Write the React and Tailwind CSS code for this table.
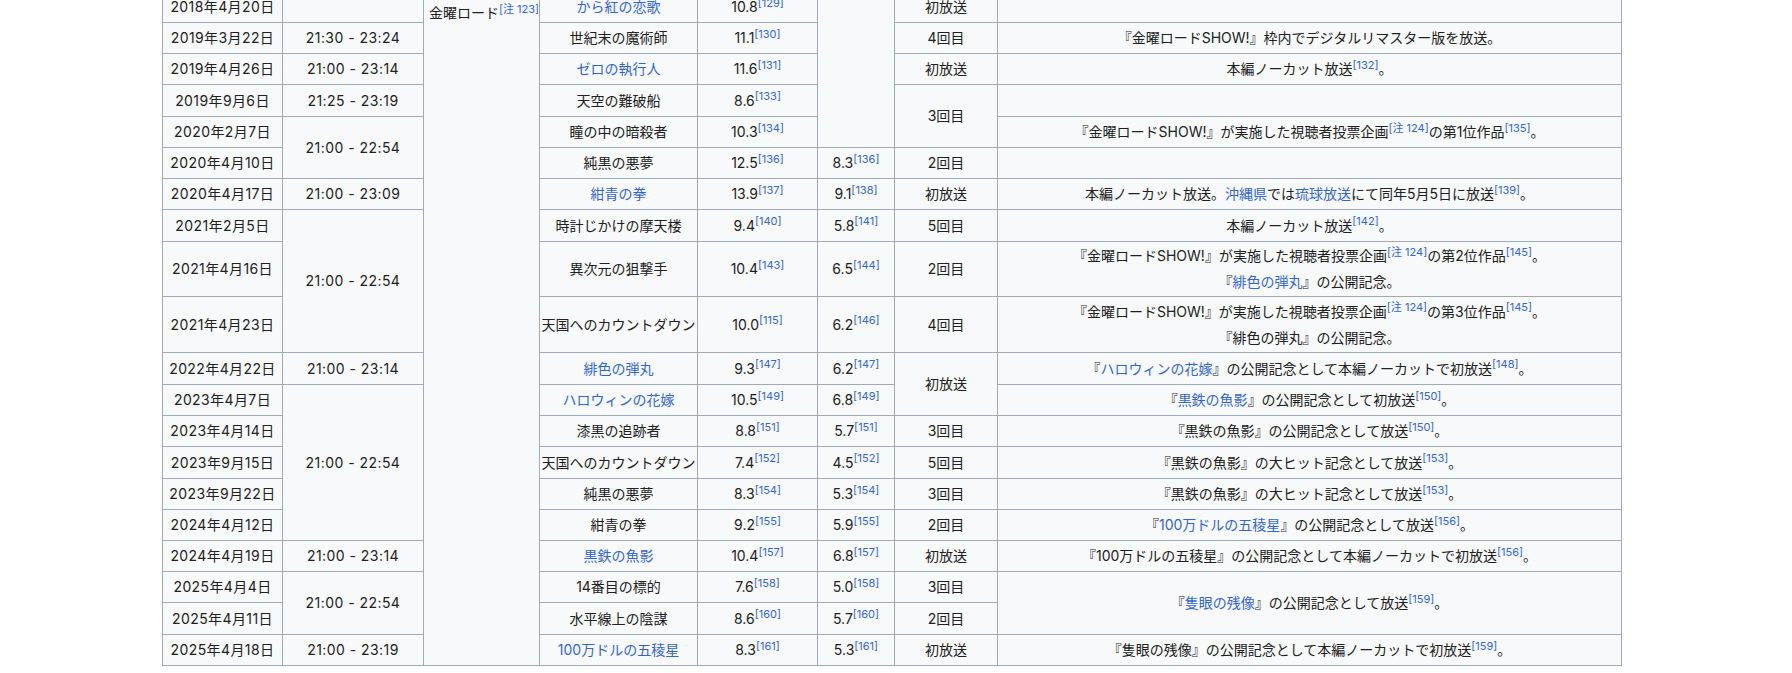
const LINK = 'text-[#3366cc]'

function Ref({ children }) {
  return <sup className="text-[11px] tracking-normal text-[#3366cc]">[{children}]</sup>
}

function L({ children }) {
  return <span className={LINK}>{children}</span>
}

function Td({ children, rowSpan, className = '' }) {
  return (
    <td
      rowSpan={rowSpan}
      className={`border border-[#a2a9b1] px-px py-0 text-center align-middle whitespace-nowrap ${className}`}
    >
      {children}
    </td>
  )
}

// date and time cells: the reference's digits run a bit wider than Inter's
function D({ children }) {
  return <Td className="tracking-[0.4px]">{children}</Td>
}

function T({ children, rowSpan }) {
  return (
    <Td rowSpan={rowSpan} className="tracking-[0.45px]">
      {children}
    </Td>
  )
}

const SHOW = '『金曜ロードSHOW!』'

export default function App() {
  return (
    <div className="h-[673px] overflow-hidden bg-white pl-[162px]">
      <table className="-mt-[9px] w-[1459px] table-fixed border-collapse bg-[#f8f9fa] font-['Inter','Noto_Sans_CJK_JP',sans-serif] text-[14px] leading-[26px] text-[#202122]">
        <colgroup>
          <col className="w-[120px]" />
          <col className="w-[141px]" />
          <col className="w-[116px]" />
          <col className="w-[158px]" />
          <col className="w-[120px]" />
          <col className="w-[77px]" />
          <col className="w-[103px]" />
          <col className="w-[624px]" />
        </colgroup>
        <tbody>
          <tr className="h-[31px]">
            <D>2018年4月20日</D>
            <Td></Td>
            <Td rowSpan={20} className="!text-left !align-top pl-[5px] pt-[8px]">
              金曜ロード<Ref>注 123</Ref>
            </Td>
            <Td><L>から紅の恋歌</L></Td>
            <Td>10.8<Ref>129</Ref></Td>
            <Td rowSpan={5}></Td>
            <Td>初放送</Td>
            <Td></Td>
          </tr>
          <tr className="h-[31px]">
            <D>2019年3月22日</D>
            <T>21:30 - 23:24</T>
            <Td>世紀末の魔術師</Td>
            <Td>11.1<Ref>130</Ref></Td>
            <Td>4回目</Td>
            <Td>{SHOW}枠内でデジタルリマスター版を放送。</Td>
          </tr>
          <tr className="h-[31px]">
            <D>2019年4月26日</D>
            <T>21:00 - 23:14</T>
            <Td><L>ゼロの執行人</L></Td>
            <Td>11.6<Ref>131</Ref></Td>
            <Td>初放送</Td>
            <Td>本編ノーカット放送<Ref>132</Ref>。</Td>
          </tr>
          <tr className="h-[32px]">
            <D>2019年9月6日</D>
            <T>21:25 - 23:19</T>
            <Td>天空の難破船</Td>
            <Td>8.6<Ref>133</Ref></Td>
            <Td rowSpan={2}>3回目</Td>
            <Td></Td>
          </tr>
          <tr className="h-[31px]">
            <D>2020年2月7日</D>
            <T rowSpan={2}>21:00 - 22:54</T>
            <Td>瞳の中の暗殺者</Td>
            <Td>10.3<Ref>134</Ref></Td>
            <Td>{SHOW}が実施した視聴者投票企画<Ref>注 124</Ref>の第1位作品<Ref>135</Ref>。</Td>
          </tr>
          <tr className="h-[31px]">
            <D>2020年4月10日</D>
            <Td>純黒の悪夢</Td>
            <Td>12.5<Ref>136</Ref></Td>
            <Td>8.3<Ref>136</Ref></Td>
            <Td>2回目</Td>
            <Td></Td>
          </tr>
          <tr className="h-[31px]">
            <D>2020年4月17日</D>
            <T>21:00 - 23:09</T>
            <Td><L>紺青の拳</L></Td>
            <Td>13.9<Ref>137</Ref></Td>
            <Td>9.1<Ref>138</Ref></Td>
            <Td>初放送</Td>
            <Td>
              本編ノーカット放送。<L>沖縄県</L>では<L>琉球放送</L>にて同年5月5日に放送<Ref>139</Ref>。
            </Td>
          </tr>
          <tr className="h-[32px]">
            <D>2021年2月5日</D>
            <T rowSpan={3}>21:00 - 22:54</T>
            <Td>時計じかけの摩天楼</Td>
            <Td>9.4<Ref>140</Ref></Td>
            <Td>5.8<Ref>141</Ref></Td>
            <Td>5回目</Td>
            <Td>本編ノーカット放送<Ref>142</Ref>。</Td>
          </tr>
          <tr className="h-[55px]">
            <D>2021年4月16日</D>
            <Td>異次元の狙撃手</Td>
            <Td>10.4<Ref>143</Ref></Td>
            <Td>6.5<Ref>144</Ref></Td>
            <Td>2回目</Td>
            <Td>
              {SHOW}が実施した視聴者投票企画<Ref>注 124</Ref>の第2位作品<Ref>145</Ref>。
              <br />
              『<L>緋色の弾丸</L>』の公開記念。
            </Td>
          </tr>
          <tr className="h-[56px]">
            <D>2021年4月23日</D>
            <Td>天国へのカウントダウン</Td>
            <Td>10.0<Ref>115</Ref></Td>
            <Td>6.2<Ref>146</Ref></Td>
            <Td>4回目</Td>
            <Td>
              {SHOW}が実施した視聴者投票企画<Ref>注 124</Ref>の第3位作品<Ref>145</Ref>。
              <br />
              『緋色の弾丸』の公開記念。
            </Td>
          </tr>
          <tr className="h-[32px]">
            <D>2022年4月22日</D>
            <T>21:00 - 23:14</T>
            <Td><L>緋色の弾丸</L></Td>
            <Td>9.3<Ref>147</Ref></Td>
            <Td>6.2<Ref>147</Ref></Td>
            <Td rowSpan={2}>初放送</Td>
            <Td>『<L>ハロウィンの花嫁</L>』の公開記念として本編ノーカットで初放送<Ref>148</Ref>。</Td>
          </tr>
          <tr className="h-[31px]">
            <D>2023年4月7日</D>
            <T rowSpan={5}>21:00 - 22:54</T>
            <Td><L>ハロウィンの花嫁</L></Td>
            <Td>10.5<Ref>149</Ref></Td>
            <Td>6.8<Ref>149</Ref></Td>
            <Td>『<L>黒鉄の魚影</L>』の公開記念として初放送<Ref>150</Ref>。</Td>
          </tr>
          <tr className="h-[31px]">
            <D>2023年4月14日</D>
            <Td>漆黒の追跡者</Td>
            <Td>8.8<Ref>151</Ref></Td>
            <Td>5.7<Ref>151</Ref></Td>
            <Td>3回目</Td>
            <Td>『黒鉄の魚影』の公開記念として放送<Ref>150</Ref>。</Td>
          </tr>
          <tr className="h-[32px]">
            <D>2023年9月15日</D>
            <Td>天国へのカウントダウン</Td>
            <Td>7.4<Ref>152</Ref></Td>
            <Td>4.5<Ref>152</Ref></Td>
            <Td>5回目</Td>
            <Td>『黒鉄の魚影』の大ヒット記念として放送<Ref>153</Ref>。</Td>
          </tr>
          <tr className="h-[31px]">
            <D>2023年9月22日</D>
            <Td>純黒の悪夢</Td>
            <Td>8.3<Ref>154</Ref></Td>
            <Td>5.3<Ref>154</Ref></Td>
            <Td>3回目</Td>
            <Td>『黒鉄の魚影』の大ヒット記念として放送<Ref>153</Ref>。</Td>
          </tr>
          <tr className="h-[31px]">
            <D>2024年4月12日</D>
            <Td>紺青の拳</Td>
            <Td>9.2<Ref>155</Ref></Td>
            <Td>5.9<Ref>155</Ref></Td>
            <Td>2回目</Td>
            <Td>『<L>100万ドルの五稜星</L>』の公開記念として放送<Ref>156</Ref>。</Td>
          </tr>
          <tr className="h-[31px]">
            <D>2024年4月19日</D>
            <T>21:00 - 23:14</T>
            <Td><L>黒鉄の魚影</L></Td>
            <Td>10.4<Ref>157</Ref></Td>
            <Td>6.8<Ref>157</Ref></Td>
            <Td>初放送</Td>
            <Td>『100万ドルの五稜星』の公開記念として本編ノーカットで初放送<Ref>156</Ref>。</Td>
          </tr>
          <tr className="h-[31px]">
            <D>2025年4月4日</D>
            <T rowSpan={2}>21:00 - 22:54</T>
            <Td>14番目の標的</Td>
            <Td>7.6<Ref>158</Ref></Td>
            <Td>5.0<Ref>158</Ref></Td>
            <Td>3回目</Td>
            <Td rowSpan={2}>『<L>隻眼の残像</L>』の公開記念として放送<Ref>159</Ref>。</Td>
          </tr>
          <tr className="h-[32px]">
            <D>2025年4月11日</D>
            <Td>水平線上の陰謀</Td>
            <Td>8.6<Ref>160</Ref></Td>
            <Td>5.7<Ref>160</Ref></Td>
            <Td>2回目</Td>
          </tr>
          <tr className="h-[31px]">
            <D>2025年4月18日</D>
            <T>21:00 - 23:19</T>
            <Td><L>100万ドルの五稜星</L></Td>
            <Td>8.3<Ref>161</Ref></Td>
            <Td>5.3<Ref>161</Ref></Td>
            <Td>初放送</Td>
            <Td>『隻眼の残像』の公開記念として本編ノーカットで初放送<Ref>159</Ref>。</Td>
          </tr>
        </tbody>
      </table>
    </div>
  )
}
